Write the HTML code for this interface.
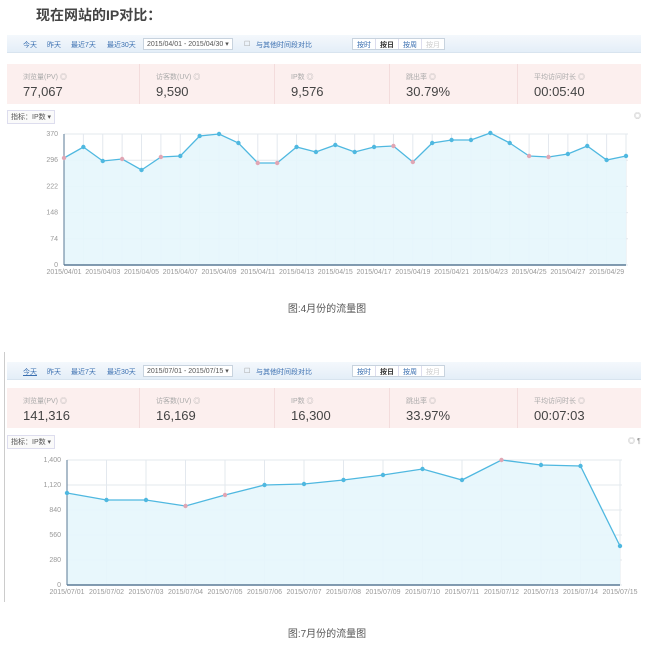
<!DOCTYPE html>
<html><head><meta charset="utf-8">
<style>
*{margin:0;padding:0;box-sizing:border-box}
body{width:654px;height:645px;background:#fff;font-family:"Liberation Sans","Noto Sans CJK SC",sans-serif;position:relative;overflow:hidden;color:#333}
.a{position:absolute}
.title{left:36px;top:5px;font-size:14px;font-weight:bold;color:#444}
.bar{height:18px;background:linear-gradient(#f4f8fc,#e4eef8);border-bottom:1px solid #d8e4ef;font-size:7px;color:#3a6fb0;white-space:nowrap}
.bar span{position:absolute;top:5px}
.date{position:absolute;top:3px;height:12px;border:1px solid #c8d3de;background:#fff;color:#555;font-size:7px;padding:1px 3px}
.btns{position:absolute;top:3px;height:12px;border:1px solid #c8d3de;background:#fff;font-size:7px;display:flex}
.btns i{font-style:normal;padding:1px 4px;border-right:1px solid #dde;color:#3a6fb0}
.stats{background:#fcefee;height:40px;display:flex}
.stats div{border-right:1px solid #f3dcdc;padding:8px 0 0 16px}
.stats div:last-child{border-right:none}
.stats small{display:block;font-size:7px;color:#aaa}
.stats b{display:block;font-weight:normal;font-size:13px;color:#444;margin-top:2px}
.sel{font-size:7px;color:#555;border:1px solid #dde;padding:1px 3px;background:#fafafa}
.cap{font-size:10px;color:#555;width:654px;text-align:center}
svg text{font-family:"Liberation Sans",sans-serif;font-size:7px;fill:#999}
</style></head><body>
<div class="a title">现在网站的IP对比：</div>

<div class="a bar" style="left:7px;top:35px;width:634px">
<span style="left:16px">今天</span><span style="left:40px">昨天</span><span style="left:64px">最近7天</span><span style="left:100px">最近30天</span>
<div class="date" style="left:136px">2015/04/01 - 2015/04/30 ▾</div>
<span style="left:237px;color:#999">☐</span><span style="left:249px">与其他时间段对比</span>
<div class="btns" style="left:345px"><i>按时</i><i style="color:#333;font-weight:bold">按日</i><i>按周</i><i style="color:#ccc;border:none">按月</i></div>
</div>
<div class="a stats" style="left:7px;top:64px;width:634px">
<div style="width:133px"><small>浏览量(PV) ◎</small><b>77,067</b></div>
<div style="width:135px"><small>访客数(UV) ◎</small><b>9,590</b></div>
<div style="width:115px"><small>IP数 ◎</small><b>9,576</b></div>
<div style="width:128px"><small>跳出率 ◎</small><b>30.79%</b></div>
<div style="width:123px"><small>平均访问时长 ◎</small><b>00:05:40</b></div>
</div>
<div class="a sel" style="left:7px;top:110px">指标：IP数 ▾</div>
<div class="a" style="left:634px;top:111px;font-size:7px;color:#999">◎</div>
<svg class="a" id="c1" style="left:0;top:120px" width="654" height="160"></svg>
<div class="a cap" style="top:300px">图:4月份的流量图</div>

<div class="a" style="left:4px;top:352px;width:1px;height:250px;background:#ccc"></div>
<div class="a bar" style="left:7px;top:362px;width:634px">
<span style="left:16px;text-decoration:underline">今天</span><span style="left:40px">昨天</span><span style="left:64px">最近7天</span><span style="left:100px">最近30天</span>
<div class="date" style="left:136px">2015/07/01 - 2015/07/15 ▾</div>
<span style="left:237px;color:#999">☐</span><span style="left:249px">与其他时间段对比</span>
<div class="btns" style="left:345px"><i>按时</i><i style="color:#333;font-weight:bold">按日</i><i>按周</i><i style="color:#ccc;border:none">按月</i></div>
</div>
<div class="a stats" style="left:7px;top:388px;width:634px">
<div style="width:133px"><small>浏览量(PV) ◎</small><b>141,316</b></div>
<div style="width:135px"><small>访客数(UV) ◎</small><b>16,169</b></div>
<div style="width:115px"><small>IP数 ◎</small><b>16,300</b></div>
<div style="width:128px"><small>跳出率 ◎</small><b>33.97%</b></div>
<div style="width:123px"><small>平均访问时长 ◎</small><b>00:07:03</b></div>
</div>
<div class="a sel" style="left:7px;top:435px">指标：IP数 ▾</div>
<div class="a" style="left:628px;top:436px;font-size:7px;color:#999">◎ ¶</div>
<svg class="a" id="c2" style="left:0;top:445px" width="654" height="160"></svg>
<div class="a cap" style="top:625px">图:7月份的流量图</div>

<script>
function chart(id,oy,x0,x1,yTop,yBot,ys,labels,lblEvery,dates,pinks){
 var s='',n=ys.length,st=(x1-x0)/(n-1);
 for(var i=0;i<labels.length;i++){var y=yTop+(yBot-yTop)*i/(labels.length-1)-oy;
  s+='<line x1="'+x0+'" x2="'+(x1+2)+'" y1="'+y+'" y2="'+y+'" stroke="#e3e8ee"/>';
  s+='<text x="'+(x0-6)+'" y="'+(y+2)+'" text-anchor="end">'+labels[i]+'</text>';}
 var pts=[];
 for(var i=0;i<n;i++){var x=x0+i*st;pts.push(x+','+(ys[i]-oy));
  s+='<line x1="'+x+'" x2="'+x+'" y1="'+(yTop-oy)+'" y2="'+(yBot-oy)+'" stroke="#e3e8ee"/>';}
 s+='<polygon points="'+x0+','+(yBot-oy)+' '+pts.join(' ')+' '+x1+','+(yBot-oy)+'" fill="#e6f6fc" opacity="0.9"/>';
 s+='<line x1="'+x0+'" x2="'+x1+'" y1="'+(yBot-oy)+'" y2="'+(yBot-oy)+'" stroke="#5a7a95" stroke-width="1.5"/>';
 s+='<line x1="'+x0+'" x2="'+x0+'" y1="'+(yTop-oy)+'" y2="'+(yBot-oy)+'" stroke="#5a7a95"/>';
 s+='<polyline points="'+pts.join(' ')+'" fill="none" stroke="#4fb8e0" stroke-width="1.3"/>';
 for(var i=0;i<n;i++){var p=pts[i].split(',');
  s+='<circle cx="'+p[0]+'" cy="'+p[1]+'" r="2.2" fill="'+(pinks.indexOf(i)>=0?'#e0a6b4':'#4fb8e0')+'"/>';
  if(i%lblEvery==0)s+='<text x="'+p[0]+'" y="'+(yBot-oy+9)+'" text-anchor="middle">'+dates[i]+'</text>';}
 document.getElementById(id).innerHTML=s;
}
var y1=[158,147,161,159,170,157,156,136,134,143,163,163,147,152,145,152,147,146,162,143,140,140,133,143,156,157,154,146,160,156];
var d1=[];for(var i=1;i<=30;i++)d1.push('2015/04/'+(i<10?'0':'')+i);
chart('c1',120,64,626,134,265,y1,['370','296','222','148','74','0'],2,d1,[0,3,5,10,11,17,18,24,25]);
var y2=[493,500,500,506,495,485,484,480,475,469,480,460,465,466,546];
var d2=[];for(var i=1;i<=15;i++)d2.push('2015/07/'+(i<10?'0':'')+i);
chart('c2',445,67,620,460,585,y2,['1,400','1,120','840','560','280','0'],1,d2,[3,4,11]);
</script>
</body></html>
